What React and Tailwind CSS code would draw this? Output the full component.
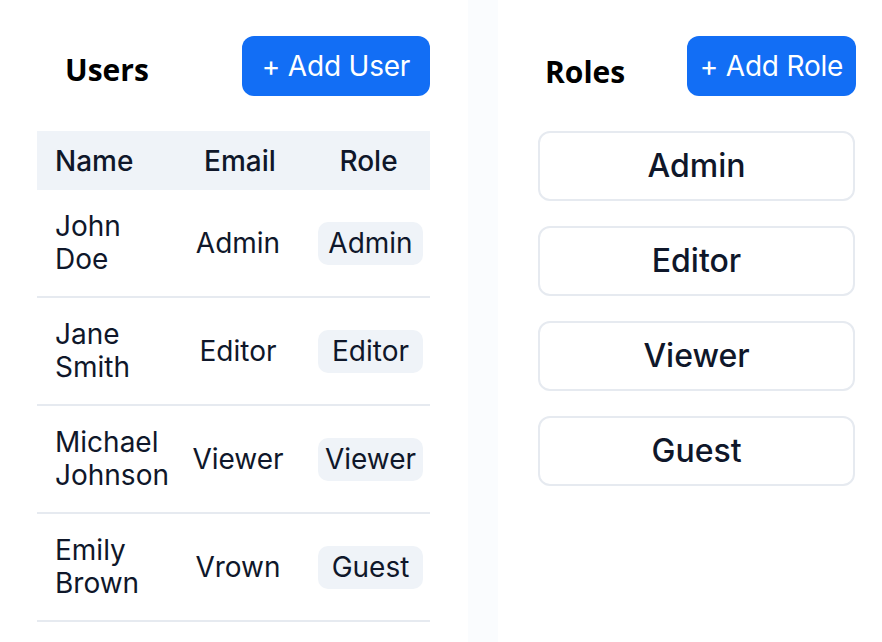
import React from "react";

const users = [
  { first: "John", last: "Doe", email: "Admin", role: "Admin" },
  { first: "Jane", last: "Smith", email: "Editor", role: "Editor" },
  { first: "Michael", last: "Johnson", email: "Viewer", role: "Viewer" },
  { first: "Emily", last: "Brown", email: "Vrown", role: "Guest" },
];

const roles = ["Admin", "Editor", "Viewer", "Guest"];

export default function App() {
  return (
    <div
      className="flex w-[882px] h-[642px] bg-[#fafcfe] text-[#0f172a] overflow-hidden"
      style={{ fontFamily: "Inter, 'Noto Sans', sans-serif" }}
    >
      {/* Users panel */}
      <div className="w-[468px] bg-white pl-[37px] pr-[38px] pt-[36px]">
        <div className="flex items-center justify-between h-[60px]">
          <h1
            className="ml-[28px] mt-[6px] text-[30px] font-bold text-black"
            style={{ fontFamily: "'Open Sans', sans-serif" }}
          >
            Users
          </h1>
          <button className="h-[60px] w-[188px] rounded-[12px] bg-[#126ef5] text-white text-[28px] font-normal tracking-[-0.2px]">
            + Add User
          </button>
        </div>

        <div className="mt-[35px]">
          <div className="grid grid-cols-[148px_118px_127px] h-[59px] items-center bg-[#eff3f8] text-[28px] font-medium">
            <div className="pl-[18px]">Name</div>
            <div className="text-center pr-[8px]">Email</div>
            <div className="text-center pl-[4px]">Role</div>
          </div>
          {users.map((u) => (
            <div
              key={u.first}
              className="grid grid-cols-[148px_118px_127px] h-[108px] items-center border-b-2 border-[#e6eaf0] text-[28px]"
            >
              <div className="pl-[18px] leading-[33px]">
                <div>{u.first}</div>
                <div>{u.last}</div>
              </div>
              <div className="text-center pr-[12px]">{u.email}</div>
              <div className="flex justify-end pr-[7px]">
                <span className="w-[105px] h-[43px] flex items-center justify-center rounded-[10px] bg-[#eff3f8]">
                  {u.role}
                </span>
              </div>
            </div>
          ))}
        </div>
      </div>

      {/* Roles panel */}
      <div className="flex-1 ml-[30px] bg-white pl-[40px] pr-[26px] pt-[36px]">
        <div className="flex items-center justify-between h-[60px]">
          <h2
            className="ml-[7px] mt-[10px] text-[30px] font-bold text-black"
            style={{ fontFamily: "'Open Sans', sans-serif" }}
          >
            Roles
          </h2>
          <button className="h-[60px] w-[169px] rounded-[12px] bg-[#126ef5] text-white text-[28px] font-normal tracking-[-0.2px]">
            + Add Role
          </button>
        </div>
        <div className="mt-[35px] flex flex-col gap-[25px] pr-[1px]">
          {roles.map((r) => (
            <div
              key={r}
              className="h-[70px] rounded-[12px] border-2 border-[#e6eaf0] flex items-center justify-center text-[32px] font-medium"
            >
              {r}
            </div>
          ))}
        </div>
      </div>
    </div>
  );
}
